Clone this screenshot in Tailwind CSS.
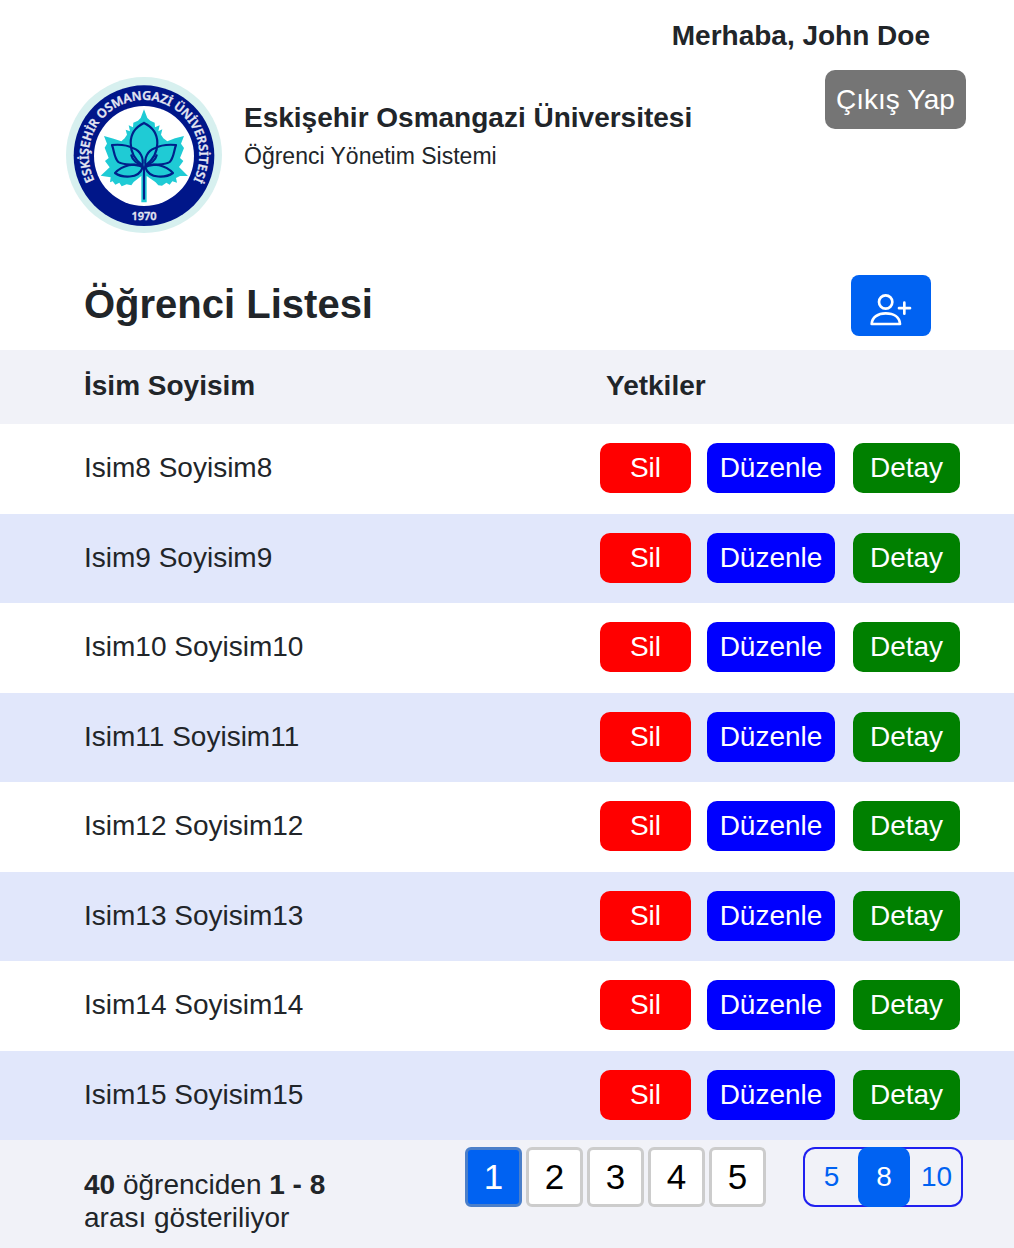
<!DOCTYPE html>
<html lang="tr">
<head>
<meta charset="utf-8">
<meta name="viewport" content="width=device-width, initial-scale=1">
<title>Öğrenci Yönetim Sistemi</title>
<script src="https://cdn.jsdelivr.net/npm/@tailwindcss/browser@4"></script>
</head>
<body class="flex min-h-screen flex-col bg-white font-['Liberation_Sans',Arial,sans-serif] text-[28px] leading-[42px] text-[#212529]">
<header class="pl-[66px] pr-12 pt-[15px]">
  <p class="pr-9 text-right font-bold">Merhaba, John Doe</p>
  <div class="mt-[13px] flex items-start">
    <svg class="mt-[7px] size-[156px] shrink-0" viewBox="17 20 468 468" role="img" aria-label="Eskişehir Osmangazi Üniversitesi logosu">
      <defs><path id="ring" d="M251 421 A166 166 0 1 1 251.1 421"/></defs>
      <circle cx="251" cy="254" r="234" fill="#d7f0ef"/>
      <circle cx="251" cy="256" r="211" fill="#001689"/>
      <circle cx="251" cy="257" r="150" fill="#fff"/>
      <text class="font-['Noto_Sans','Open_Sans',sans-serif] text-[37px] font-semibold" fill="#e4e6f2" stroke="#e4e6f2" stroke-width="1" text-anchor="middle"><textPath href="#ring" startOffset="50%">ESKİŞEHİR OSMANGAZİ ÜNİVERSİTESİ</textPath></text>
      <text class="font-['Noto_Sans','Open_Sans',sans-serif] text-[33px] font-semibold" x="251" y="450" fill="#e4e6f2" stroke="#e4e6f2" stroke-width="1" text-anchor="middle">1970</text>
      <path fill="#1fcbd5" d="M251 117 L261 143 L270 151 L283 157 L284 171 L298 165 L294 183 L306 177 L302 193 L309 204 L321 213 L344 204 L371 197 L362 220 L371 233 L359 263 L369 272 L356 290 L383 317 L359 317 L347 323 L350 337 L336 333 L328 343 L318 337 L305 346 L294 345 L285 335 L259 317 V396 H243 V317 L220 335 L213 345 L199 342 L184 348 L177 337 L165 343 L157 333 L149 336 L151 321 L121 316 L148 291 L134 272 L145 263 L133 232 L140 220 L131 197 L160 205 L183 213 L193 204 L200 193 L196 178 L209 183 L205 165 L218 171 L219 157 L233 151 L241 143 Z"/>
      <g fill="none" stroke="#00208a" stroke-width="6.500" stroke-linecap="round" stroke-linejoin="round">
        <path d="M251 158 C226 170 211 192 211 218 C211 246 226 270 246 285 M251 158 C276 170 291 192 291 218 C291 246 276 270 256 285"/>
        <path d="M246 285 C251 262 240 242 219 234 C201 224 175 222 155 224 C162 242 161 262 174 275 C188 286 222 280 246 288"/>
        <path d="M256 285 C251 262 262 242 283 234 C301 224 327 222 347 224 C340 242 341 262 328 275 C314 286 280 280 256 288"/>
        <path d="M246 285 C232 281 216 270 213 255 M256 285 C270 281 286 270 289 255"/>
        <path d="M247 291 C226 274 185 286 164 308 C184 322 235 328 247 291 Z M255 291 C276 274 317 286 338 308 C318 322 267 328 255 291 Z"/>
        <path d="M251 290 V385"/>
      </g>
    </svg>
    <div class="ml-[22px] mt-[29px]">
      <h1 class="font-bold leading-[38px]">Eskişehir Osmangazi Üniversitesi</h1>
      <p class="text-[23px] leading-[38px]">Öğrenci Yönetim Sistemi</p>
    </div>
    <button type="button" class="ml-auto h-[59px] w-[141px] shrink-0 rounded-[10px] bg-[#757575] text-white">Çıkış Yap</button>
  </div>
</header>
<main class="mt-[42px] flex grow flex-col">
  <div class="flex items-start justify-between pl-[84px] pr-[83px] pb-3.5">
    <h2 class="text-[40px] font-bold leading-[58px]">Öğrenci Listesi</h2>
    <button type="button" aria-label="Öğrenci ekle" class="flex h-[61px] w-20 items-center justify-center rounded-lg bg-[#0062f2] pt-2">
      <svg class="h-8 w-[42px]" viewBox="90 88 126 96" fill="none" stroke="#fff" stroke-width="8" aria-hidden="true"><ellipse cx="137" cy="112" rx="20" ry="20"/><path d="M95 178 C96 157 114 146 137 146 C161 146 179 157 180 178 Z" stroke-linejoin="round"/><path d="M193 114 V147 M177 130.500 H210" stroke-linecap="round"/></svg>
    </button>
  </div>
  <table class="w-full table-fixed text-left">
    <colgroup><col><col class="w-[414px]"></colgroup>
    <thead class="bg-[#f1f2f8]"><tr class="h-[74px]"><th scope="col" class="p-0 pb-0.5 pl-[84px]">İsim Soyisim</th><th scope="col" class="p-0 pb-0.5 pl-1.5">Yetkiler</th></tr></thead>
    <tbody id="students"></tbody>
  </table>
  <footer class="flex grow items-start bg-[#f1f2f8] pl-[84px] pr-[51px] pt-[7px]">
    <p class="mt-[21px] w-64 leading-[33px]"><b>40</b> öğrenciden <b>1 - 8</b> arası gösteriliyor</p>
    <nav aria-label="Sayfalar" class="ml-auto flex gap-1 text-[35px] text-black">
      <button type="button" aria-current="page" class="h-[60px] w-[57px] rounded-md border-3 border-[#4b7fc9] bg-[#0062f2] text-white">1</button>
      <button type="button" class="h-[60px] w-[57px] rounded-md border-3 border-[#ccc] bg-white">2</button>
      <button type="button" class="h-[60px] w-[57px] rounded-md border-3 border-[#ccc] bg-white">3</button>
      <button type="button" class="h-[60px] w-[57px] rounded-md border-3 border-[#ccc] bg-white">4</button>
      <button type="button" class="h-[60px] w-[57px] rounded-md border-3 border-[#ccc] bg-white">5</button>
    </nav>
    <div role="group" aria-label="Sayfa başına öğrenci" class="ml-[37px] flex h-[60px] w-40 rounded-xl text-[#0062f2] ring-2 ring-inset ring-[#2020f0]">
      <button type="button" class="w-[55px] pl-0.5">5</button>
      <button type="button" aria-pressed="true" class="w-[52px] rounded-[10px] bg-[#0062f2] text-white">8</button>
      <button type="button" class="w-[53px]">10</button>
    </div>
  </footer>
</main>
<script>
document.getElementById('students').innerHTML = [8, 9, 10, 11, 12, 13, 14, 15].map(n => `
<tr class="h-[90px] even:h-[89px] even:bg-[#e1e7fb]">
  <td class="p-0 pb-0.5 pl-[84px]">Isim${n} Soyisim${n}</td>
  <td class="p-0 pb-0.5"><div class="flex items-center text-white">
    <button type="button" class="h-[50px] w-[91px] rounded-[10px] bg-[#ff0000]">Sil</button>
    <button type="button" class="ml-4 h-[50px] w-32 rounded-[10px] bg-[#0000ff]">Düzenle</button>
    <button type="button" class="ml-[18px] h-[50px] w-[107px] rounded-[10px] bg-[#008000]">Detay</button>
  </div></td>
</tr>`).join('');
</script>
</body>
</html>
